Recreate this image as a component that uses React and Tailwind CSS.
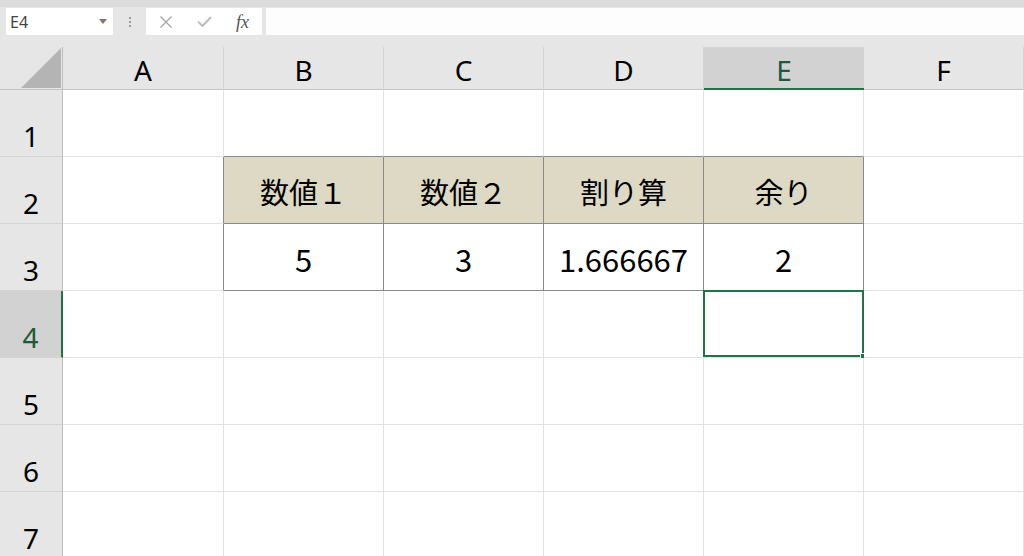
import React from "react";

const COLS = ["A", "B", "C", "D", "E", "F"];
const ROWS = [1, 2, 3, 4, 5, 6, 7];

const table = {
  "B2": "数値１",
  "C2": "数値２",
  "D2": "割り算",
  "E2": "余り",
  "B3": "5",
  "C3": "3",
  "D3": "1.666667",
  "E3": "2",
};

function cellClass(col, row) {
  const inTable = ["B", "C", "D", "E"].includes(col) && (row === 2 || row === 3);
  const aboveTable = ["B", "C", "D", "E"].includes(col) && row === 1;
  const leftOfTable = col === "A" && (row === 2 || row === 3);
  if (inTable) {
    return row === 2
      ? "bg-[#ddd9c4] border-r border-b border-[#8a8a8a]"
      : "bg-white border-r border-b border-[#8a8a8a]";
  }
  if (aboveTable) return "bg-white border-r border-r-[#e2e2e2] border-b border-b-[#8a8a8a]";
  if (leftOfTable) return "bg-white border-b border-b-[#e2e2e2] border-r border-r-[#8a8a8a]";
  return "bg-white border-r border-b border-[#e2e2e2]";
}

export default function App() {
  return (
    <div className="w-[1024px] h-[556px] overflow-hidden bg-white flex flex-col font-['Noto_Sans',sans-serif]">
      {/* Formula bar */}
      <div className="h-[47px] shrink-0 bg-[#e6e6e6] flex flex-col">
        <div className="h-[7px] bg-[#dcdcdc]" />
        <div className="h-[28px] flex items-stretch pl-[6px] pt-[1px]">
          <div className="w-[107px] bg-white flex items-center justify-between pl-[4px] pr-[6px]">
            <span className="text-[16px] text-[#444] leading-none">E4</span>
            <svg width="8" height="5" viewBox="0 0 8 5"><path d="M0 0H8L4 5Z" fill="#8b7262" /></svg>
          </div>
          <div className="w-[33px] flex flex-col items-center justify-center gap-[2px]">
            <div className="w-[2px] h-[2px] bg-[#9a9a9a]" />
            <div className="w-[2px] h-[2px] bg-[#9a9a9a]" />
            <div className="w-[2px] h-[2px] bg-[#9a9a9a]" />
          </div>
          <div className="w-[116px] bg-white flex items-center pl-[14px]">
            <svg width="12" height="12" viewBox="0 0 12 12">
              <path d="M0.5 0.5L11.5 11.5M11.5 0.5L0.5 11.5" stroke="#a6a6a6" strokeWidth="1.3" />
            </svg>
            <svg width="15" height="11" viewBox="0 0 15 11" className="ml-[25px]">
              <path d="M1 5.5L5.5 10L14 1" stroke="#bdbdbd" strokeWidth="2" fill="none" />
            </svg>
            <span className="ml-[24px] font-['Liberation_Serif',serif] italic text-[18px] text-[#555] leading-none">fx</span>
          </div>
          <div className="w-[4px]" />
          <div className="flex-1 bg-[#fdfdfd]" />
        </div>
      </div>

      {/* Sheet grid */}
      <div className="grid grid-cols-[63px_161px_160px_160px_160px_160px_160px] grid-rows-[43px_repeat(7,67px)]">
        {/* corner */}
        <div className="relative bg-[#e6e6e6] border-r border-b border-r-[#bdbdbd] border-b-[#c4c4c4]">
          <svg width="40" height="40" viewBox="0 0 40 40" className="absolute right-[1px] bottom-[1px]">
            <path d="M40 0V40H0Z" fill="#b4b4b4" />
          </svg>
        </div>
        {COLS.map((c) =>
          c === "E" ? (
            <div key={c} className="bg-[#d2d2d2] border-b-2 border-[#217346] flex items-center justify-center pt-[4px]">
              <span className="text-[28px] leading-none text-[#1d5a3a]">{c}</span>
            </div>
          ) : (
            <div key={c} className="bg-[#e6e6e6] border-r border-b border-r-[#d4d4d4] border-b-[#c4c4c4] flex items-center justify-center pt-[4px]">
              <span className="text-[28px] leading-none text-black">{c}</span>
            </div>
          )
        )}

        {ROWS.map((r) => (
          <React.Fragment key={r}>
            {r === 4 ? (
              <div className="bg-[#d2d2d2] border-r-2 border-r-[#217346] border-b border-b-[#d4d4d4] flex items-end justify-center pb-[6px]">
                <span className="text-[28px] leading-none text-[#1d5a3a]">{r}</span>
              </div>
            ) : (
              <div className="bg-[#e6e6e6] border-r border-b border-r-[#bdbdbd] border-b-[#d4d4d4] flex items-end justify-center pb-[6px]">
                <span className="text-[28px] leading-none text-black">{r}</span>
              </div>
            )}
            {COLS.map((c) => {
              const key = c + r;
              const val = table[key];
              const isNum = r === 3;
              return (
                <div key={key} className={"relative flex items-center justify-center " + cellClass(c, r)}>
                  {val && (
                    <span
                      className={
                        isNum
                          ? "font-['Noto_Sans_CJK_JP',sans-serif] text-[31px] leading-none text-black pt-[2px]"
                          : "font-['Noto_Sans_CJK_JP',sans-serif] text-[29px] leading-none text-black pt-[3px]"
                      }
                    >
                      {val}
                    </span>
                  )}
                  {key === "E4" && (
                    <div className="absolute -left-[1px] -top-[1px] -right-[1px] bottom-0 border-2 border-[#217346]">
                      <div className="absolute -right-[4px] -bottom-[4px] w-[6px] h-[6px] bg-[#217346] border border-white" />
                    </div>
                  )}
                </div>
              );
            })}
          </React.Fragment>
        ))}
      </div>
    </div>
  );
}
